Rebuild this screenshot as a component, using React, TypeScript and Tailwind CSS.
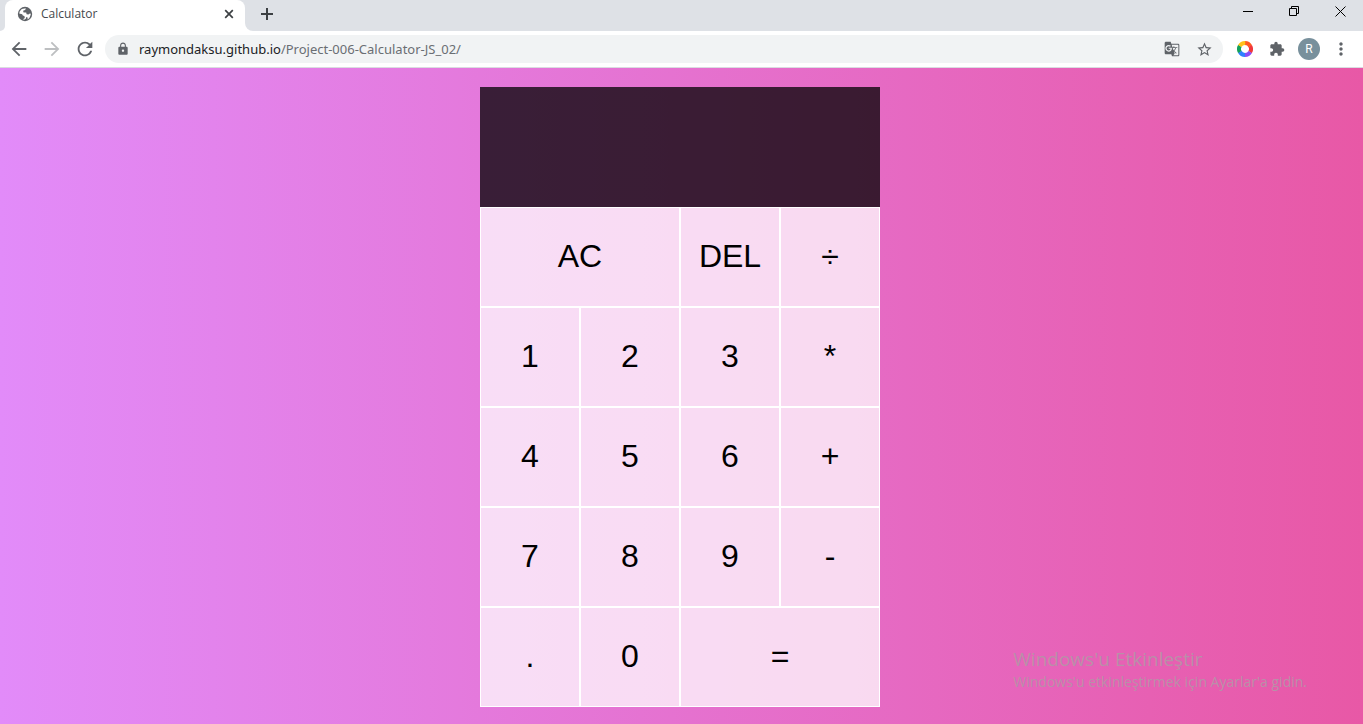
import { MdArrowBack, MdArrowForward, MdRefresh, MdLock, MdStarBorder, MdExtension, MdMoreVert, MdGTranslate } from "react-icons/md";

const keys = [
  { label: "AC", wide: true },
  { label: "DEL" },
  { label: "÷" },
  { label: "1" },
  { label: "2" },
  { label: "3" },
  { label: "*" },
  { label: "4" },
  { label: "5" },
  { label: "6" },
  { label: "+" },
  { label: "7" },
  { label: "8" },
  { label: "9" },
  { label: "-" },
  { label: "." },
  { label: "0" },
  { label: "=", wide: true },
];

const ringColors = ["#ff5a1f", "#f0383c", "#8a4df5", "#2f80ff", "#14a05a", "#ffc21a"];

function GlobeIcon() {
  return (
    <svg className="size-4" viewBox="0 0 16 16" aria-hidden="true">
      <circle cx="8" cy="8" r="7.200" fill="#5f6368" />
      <path d="M8.800 2.200 8.200 4 6.400 4.600 6.200 6.200 7.600 6.400 9.200 6.600 9.600 8.200 11.400 8.600 13.200 7.200 13.800 8.400 12.400 12 10.600 13.400 10.600 11.600 9.200 11 9 12.600 7.200 13.800 6 13.200 7.800 12 7.400 10 5.800 9.400 5.200 8.200 2.200 7.600 2.800 5.200 4.800 3z" fill="#fff" />
    </svg>
  );
}

function ColorRing() {
  return (
    <svg className="size-4" viewBox="0 0 16 16" fill="none" strokeWidth="4" aria-hidden="true">
      {ringColors.map((color, i) => (
        <path key={color} d="M8 2A6 6 0 0 1 13.300 5.200" stroke={color} transform={`rotate(${i * 60} 8 8)`} />
      ))}
    </svg>
  );
}

function TabStrip() {
  return (
    <div className="flex h-[31px] bg-[#dee1e6]">
      <div className="w-[5px] bg-white">
        <div className="h-full rounded-br-lg bg-[#dee1e6]" />
      </div>
      <div className="flex w-60 items-center gap-2 rounded-t-lg bg-white pr-2 pb-[3px] pl-3">
        <GlobeIcon />
        <span className="flex-1 text-xs text-[#45494d]">Calculator</span>
        <button aria-label="Close tab">
          <svg className="size-4 text-[#3c4043]" viewBox="0 0 16 16" stroke="currentColor" strokeWidth="1.700" fill="none"><path d="M4.200 4.200l7.600 7.600M11.800 4.200l-7.600 7.600" /></svg>
        </button>
      </div>
      <div className="w-2 bg-white">
        <div className="h-full rounded-bl-lg bg-[#dee1e6]" />
      </div>
      <button aria-label="New tab" className="mb-[3px] ml-1 self-center">
        <svg className="size-5 text-[#3c4043]" viewBox="0 0 20 20" stroke="currentColor" strokeWidth="2" fill="none"><path d="M4 10h12M10 4v12" /></svg>
      </button>
      <div className="ml-auto flex items-start text-black">
        <button aria-label="Minimize" className="flex h-[23px] w-[46px] items-center justify-center">
          <svg className="size-[11px]" viewBox="0 0 11 11" stroke="currentColor" fill="none"><path d="M0 5.500h10" /></svg>
        </button>
        <button aria-label="Restore" className="flex h-[23px] w-[46px] items-center justify-center">
          <svg className="size-[11px]" viewBox="0 0 11 11" stroke="currentColor" fill="none"><path d="M.5 2.500h7v7h-7zM2.500 2.500v-2h7v7h-2" /></svg>
        </button>
        <button aria-label="Close" className="flex h-[23px] w-[46px] items-center justify-center">
          <svg className="size-[11px]" viewBox="0 0 11 11" stroke="currentColor" fill="none"><path d="M.5.5l10 10M10.500.5l-10 10" /></svg>
        </button>
      </div>
    </div>
  );
}

function Toolbar() {
  return (
    <div className="flex h-[37px] items-center border-b border-[#dadce0] bg-white pr-3 pl-2 text-[#5f6368]">
      <div className="flex gap-[11px]">
        <button aria-label="Back"><MdArrowBack className="size-[22px]" /></button>
        <button aria-label="Forward"><MdArrowForward className="size-[22px] text-[#bdbfc1]" /></button>
        <button aria-label="Reload"><MdRefresh className="size-[22px]" /></button>
      </div>
      <div className="ml-[9px] flex h-7 flex-1 items-center rounded-full bg-[#f1f3f4] pr-2.5 pl-[11px]">
        <MdLock className="size-3.5" />
        <a href="#" className="ml-[9px] pt-px font-['Noto_Sans',sans-serif] text-[13px] text-[#6a6e73]">
          <span className="text-[#202124]">raymondaksu.github.io</span>/Project-006-Calculator-JS_02/
        </a>
        <div className="ml-auto flex items-center gap-4">
          <button aria-label="Translate this page"><MdGTranslate className="size-4" /></button>
          <button aria-label="Bookmark this page"><MdStarBorder className="size-[17px]" /></button>
        </div>
      </div>
      <div className="ml-3.5 flex items-center">
        <button aria-label="Color extension"><ColorRing /></button>
        <button aria-label="Extensions" className="ml-4"><MdExtension className="size-4" /></button>
        <button aria-label="Profile" className="ml-[13px] size-[22px] rounded-full bg-[#78909c] font-['Roboto',sans-serif] text-xs text-white">R</button>
        <button aria-label="Menu" className="ml-[11px]"><MdMoreVert className="size-5" /></button>
      </div>
    </div>
  );
}

export default function App() {
  return (
    <div className="flex min-h-screen flex-col font-['Open_Sans',sans-serif]">
      <TabStrip />
      <Toolbar />
      <main className="relative flex-1 bg-[linear-gradient(to_right,#e28bf9,#e858a6)] pt-[19px] pr-[3px] pb-4">
        <div className="mx-auto grid w-[400px] grid-cols-4 font-['Liberation_Sans',sans-serif] text-[32px] text-black">
          <output className="col-span-4 h-[120px] bg-black/75" aria-label="Display" />
          {keys.map((key) => (
            <button key={key.label} className={`h-[100px] border border-white bg-white/75 pb-[3px] ${key.wide ? "col-span-2" : ""}`}>
              {key.label}
            </button>
          ))}
        </div>
        <aside className="absolute right-14 bottom-8 text-[#b98fa8]">
          <p className="text-[19px] leading-[26px]">Windows'u Etkinleştir</p>
          <p className="text-sm leading-5">Windows'u etkinleştirmek için Ayarlar'a gidin.</p>
        </aside>
      </main>
    </div>
  );
}
